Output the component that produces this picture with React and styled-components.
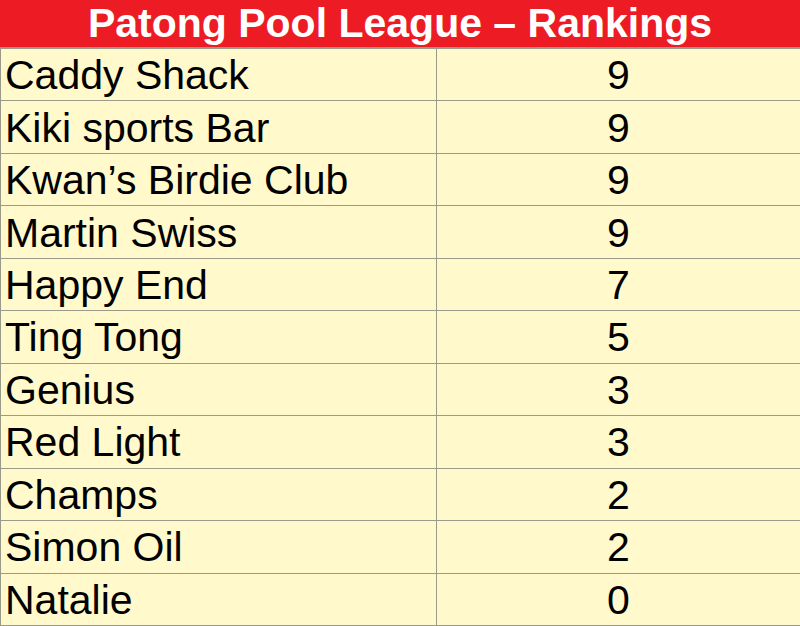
import React from "react";
import styled, { createGlobalStyle } from "styled-components";

const rankings = [
	{ team: "Caddy Shack", points: 9 },
	{ team: "Kiki sports Bar", points: 9 },
	{ team: "Kwan’s Birdie Club", points: 9 },
	{ team: "Martin Swiss", points: 9 },
	{ team: "Happy End", points: 7 },
	{ team: "Ting Tong", points: 5 },
	{ team: "Genius", points: 3 },
	{ team: "Red Light", points: 3 },
	{ team: "Champs", points: 2 },
	{ team: "Simon Oil", points: 2 },
	{ team: "Natalie", points: 0 },
];

const GlobalStyle = createGlobalStyle`
	html, body {
		margin: 0;
		padding: 0;
		background: #fff;
	}
`;

const App = () => {
	return (
		<>
			<GlobalStyle />
			<Board>
				<Title>Patong Pool League – Rankings</Title>
				{rankings.map(r => (
					<Row key={r.team}>
						<TeamCell>{r.team}</TeamCell>
						<PointsCell>{r.points}</PointsCell>
					</Row>
				))}
			</Board>
		</>
	);
};
export default App;

const Board = styled.div`
	display: flex;
	flex-direction: column;
	width: 800px;
	height: 626px;
	background-color: #fff9cc;
	font-family: "Liberation Sans", Arial, sans-serif;
	border-left: 1px solid #9a9a88;
	box-sizing: border-box;
`;

const Title = styled.div`
	flex: none;
	height: 47px;
	display: flex;
	align-items: center;
	justify-content: center;
	background-color: #ed1c24;
	color: #fff;
	font-size: 41px;
	font-weight: bold;
	border-bottom: 2px solid #9a9a88;
	margin-left: -1px;
`;

const Row = styled.div`
	flex: 1;
	display: grid;
	grid-template-columns: 436px 1fr;
	border-bottom: 1px solid #9a9a88;
`;

const TeamCell = styled.div`
	display: flex;
	align-items: center;
	padding-left: 4px;
	font-size: 41px;
	color: #000;
	border-right: 1px solid #9a9a88;
	padding-top: 2px;
`;

const PointsCell = styled.div`
	display: flex;
	align-items: center;
	justify-content: center;
	font-size: 41px;
	color: #000;
	padding-top: 2px;
`;
